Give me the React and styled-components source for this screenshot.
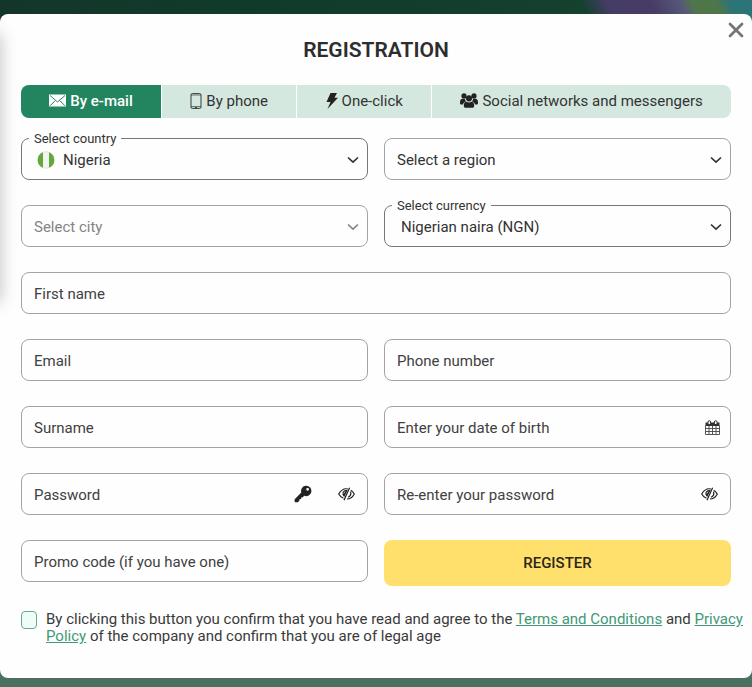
import React, { useState } from "react";
import styled, { createGlobalStyle, css } from "styled-components";

const GlobalStyle = createGlobalStyle`
  *, *::before, *::after { box-sizing: border-box; }
  body { margin: 0; background: #4c705f; }
  body, button, input, select { font-family: Roboto, "Liberation Sans", sans-serif; }
`;

const Backdrop = styled.div`
  min-height: 100vh;
  padding-top: 14px;
  background:
    linear-gradient(64deg, transparent 0 10%, #473c66 24% 46%, #57587a 62%, #4f7648 68% 80%, #2b7477 88%) right top / 176px 30px no-repeat,
    linear-gradient(90deg, #14362a, #0f3c2b 40%, #174531) top / 100% 40px no-repeat,
    #4c705f;
`;

const Modal = styled.main`
  position: relative;
  overflow: hidden;
  padding: 24px 21px 33px;
  border-radius: 8px;
  background: #fefefe;

  &::before {
    content: "";
    position: absolute;
    top: 20px;
    left: -10px;
    width: 10px;
    height: 268px;
    box-shadow: 0 0 16px rgba(0, 0, 0, 0.3);
  }
`;

const CloseButton = styled.button`
  position: absolute;
  top: 6px;
  right: 6px;
  display: flex;
  padding: 0;
  border: 0;
  background: none;
  color: #757575;
  cursor: pointer;
`;

const Title = styled.h1`
  margin: 0 0 23px;
  color: #2d2d2d;
  font-size: 21px;
  font-weight: 600;
  line-height: 24px;
  text-align: center;
`;

const Tabs = styled.div`
  display: flex;
  gap: 1px;
  margin-bottom: 20px;
  overflow: hidden;
  border-radius: 8px;
`;

const Tab = styled.button`
  flex: 1 1 auto;
  display: flex;
  align-items: center;
  justify-content: center;
  gap: 4px;
  height: 33px;
  padding: 0 0 2px;
  border: 0;
  background: ${(p) => (p.$active ? "#238560" : "#d4e8e0")};
  color: ${(p) => (p.$active ? "#fff" : "#333")};
  font-size: 15px;
  font-weight: ${(p) => (p.$active ? 500 : 400)};
  cursor: pointer;
`;

const Form = styled.form`
  display: grid;
  grid-template-columns: 1fr 1fr;
  gap: 25px 16px;
`;

const Field = styled.div`
  position: relative;
  display: grid;
  grid-template-columns: minmax(0, 1fr) auto;
  align-items: center;
  height: 42px;
  border: 1px solid ${(p) => (p.$dark ? "#777" : "#a3a3a3")};
  border-radius: 8px;
  color: ${(p) => (p.$muted ? "#858585" : "#333")};
  grid-column: ${(p) => (p.$wide ? "1 / -1" : "auto")};
`;

const control = css`
  grid-area: 1 / 1 / 2 / -1;
  width: 100%;
  height: 100%;
  margin: 0;
  border: 0;
  outline: 0;
  border-radius: 8px;
  background: transparent;
  color: inherit;
  font-size: 15px;
`;

const TextInput = styled.input`
  ${control}
  padding: 2px 12px 0;
  &::placeholder { color: #414141; opacity: 1; }
`;

const Select = styled.select`
  ${control}
  appearance: none;
  padding: 2px 32px 0 ${(p) => p.$indent}px;
  opacity: 1;
`;

const FloatingLabel = styled.label`
  position: absolute;
  top: -8px;
  left: 7px;
  padding: 0 5px;
  background: #fefefe;
  color: #333;
  font-size: 13px;
  line-height: 16px;
`;

const FlagSlot = styled.span`
  grid-area: 1 / 1;
  display: flex;
  padding: 2px 0 0 15px;
  pointer-events: none;
`;

const ChevronSlot = styled.span`
  grid-area: 1 / 2;
  display: flex;
  padding: 2px 8px 0 0;
  pointer-events: none;
`;

const Actions = styled.div`
  grid-area: 1 / 2;
  display: flex;
  align-items: center;
  gap: 26px;
  padding-right: ${(p) => p.$inset}px;
`;

const IconButton = styled.button`
  position: relative;
  display: flex;
  padding: 0;
  border: 0;
  background: none;
  color: #222;
  cursor: pointer;
`;

const Register = styled.button`
  height: 46px;
  border: 0;
  border-radius: 8px;
  background: #ffe06c;
  color: #2b2618;
  font-size: 15px;
  font-weight: 500;
  cursor: pointer;
`;

const Consent = styled.div`
  grid-column: 1 / -1;
  display: flex;
  align-items: flex-start;
  gap: 9px;
  margin-right: -16px;
  color: #3a3a3a;
  font-size: 15px;
  line-height: 17px;
`;

const Checkbox = styled.input`
  appearance: none;
  flex: none;
  width: 16px;
  height: 18px;
  margin: 0;
  border: 1px solid #68a88e;
  border-radius: 4px;
  background: #effcf7;
  &:checked { background: #238560; }
`;

const Link = styled.a`
  color: #3f9977;
  text-decoration: underline;
`;

const MailIcon = () => (
  <svg width="17" height="13" viewBox="0 0 17 13" aria-hidden="true">
    <rect y="0.5" width="17" height="12" fill="#fff" />
    <path d="M1 1.5 8.5 8 16 1.5M1 11.8l5-5M16 11.8l-5-5" fill="none" stroke="#238560" strokeWidth="1" />
  </svg>
);

const PhoneIcon = () => (
  <svg width="12" height="16" viewBox="0 0 12 16" fill="none" stroke="#3a3a3a" aria-hidden="true">
    <rect x="1" y="0.6" width="10" height="14.8" rx="1.3" />
    <path d="M1 2h10M1 13.6h10" strokeWidth="0.7" />
    <path d="M5 14.6h2" />
  </svg>
);

const BoltIcon = () => (
  <svg width="12" height="16" viewBox="0 0 12 16" fill="#222" aria-hidden="true">
    <path d="M4.500 0H11L8.500 4.800H12L1.500 16l3-7H.5z" />
  </svg>
);

const PeopleIcon = () => (
  <svg width="18" height="15" viewBox="0 0 18 15" fill="#222" aria-hidden="true">
    <circle cx="4" cy="2.900" r="2.600" />
    <circle cx="14" cy="2.900" r="2.600" />
    <path d="M0 9.200C0 7 1 5.800 2.500 5.800h2.300c.2 1.300.6 2 1.500 2.700-1.600.3-2.900 1.300-3.300 3H1.500C.5 11.500 0 11 0 10.200zM18 9.200c0-2.200-1-3.400-2.500-3.400h-2.300c-.2 1.300-.6 2-1.500 2.700 1.600.3 2.900 1.300 3.300 3h1.500c1 0 1.500-.5 1.500-1.300z" />
    <circle cx="9" cy="5.300" r="3.100" />
    <path d="M3.800 12.700c0-2.600 1-3.900 2.900-3.900 1.400 1 3.200 1 4.600 0 1.900 0 2.900 1.300 2.900 3.900 0 1.300-.7 2.100-2 2.100H5.800c-1.300 0-2-.8-2-2.100z" />
  </svg>
);

const Chevron = () => (
  <svg width="12" height="8" viewBox="0 0 12 8" fill="none" stroke="currentColor" strokeWidth="1.700" aria-hidden="true">
    <path d="m1 1.500 5 4.700 5-4.700" />
  </svg>
);

const Flag = () => (
  <svg width="18" height="18" viewBox="0 0 18 18" aria-hidden="true">
    <circle cx="9" cy="9" r="8.300" fill="#f3f4f1" stroke="#cfdcc8" strokeWidth="0.600" />
    <path d="M6 1.200v15.600a8.400 8.400 0 0 1 0-15.600zM12 1.200v15.600a8.400 8.400 0 0 0 0-15.600z" fill="#65a63f" />
  </svg>
);

const CalendarIcon = () => (
  <svg width="15" height="15" viewBox="0 0 15 15" aria-hidden="true">
    <path d="M.5 2.500h14V6H.5z" fill="#333" />
    <path d="M.5 5.500v9h14v-9M4 6v8.500M7.500 6v8.500M11 6v8.500M.5 8.500h14M.5 11.500h14" fill="none" stroke="#444" strokeWidth="0.900" />
    <path d="M3 4V2a1.300 1.300 0 0 1 2.600 0v2M9.400 4V2A1.300 1.300 0 0 1 12 2v2" fill="#fff" stroke="#333" />
  </svg>
);

const KeyIcon = () => (
  <svg width="18" height="18" viewBox="0 0 18 18" fill="#222" aria-hidden="true">
    <path fillRule="evenodd" d="M12 .8a5.200 5.200 0 1 1-1.800 10L8.800 12.200l-1.500.2-.2 1.600-1.600.2-.2 1.600-1.400 1.400H.8l-.3-2.600 6.800-7A5.200 5.200 0 0 1 12 .8zm1.600 2.100a1.400 1.400 0 1 0 0 2.800 1.400 1.400 0 0 0 0-2.800z" />
  </svg>
);

const EyeOffIcon = () => (
  <svg width="17" height="14" viewBox="0 0 17 14" fill="none" stroke="currentColor" aria-hidden="true">
    <path d="M10 2C5.500.9 2.600 3.800.7 7c1.200 2 2.700 3.600 4.700 4.300M12.700 3.200c1.500.9 2.700 2.200 3.600 3.800-1.700 3.200-4.300 5-7.300 5" strokeWidth="1.200" />
    <path d="M11.600.8 6 13.200M12.600 4.700c.6 2.600-.3 4.700-2.500 5.500" strokeWidth="1.200" />
    <path d="M9.600 3.300C6.500 2.400 4 4.500 4.500 7.300c.2 1.100.8 2.100 1.800 2.800z" fill="currentColor" stroke="none" />
    <path d="M5.800 6.500c.1-1 .6-1.600 1.500-1.900" stroke="#fff" strokeWidth="0.800" />
  </svg>
);

const CloseIcon = () => (
  <svg width="20" height="20" viewBox="0 0 20 20" fill="none" stroke="currentColor" strokeWidth="2.800" strokeLinecap="round" aria-hidden="true">
    <path d="m4 4 12 12M16 4 4 16" />
  </svg>
);

const tabs = [
  { id: "email", label: "By e-mail", Icon: MailIcon },
  { id: "phone", label: "By phone", Icon: PhoneIcon },
  { id: "click", label: "One-click", Icon: BoltIcon },
  { id: "social", label: "Social networks and messengers", Icon: PeopleIcon },
];

function SelectField({ id, label, value, floating, muted, indent = 12, flag }) {
  return (
    <Field $dark={floating} $muted={muted}>
      {flag && <FlagSlot><Flag /></FlagSlot>}
      <Select id={id} aria-label={floating ? undefined : label} disabled={muted} $indent={indent}>
        <option>{value}</option>
      </Select>
      {floating && <FloatingLabel htmlFor={id}>{label}</FloatingLabel>}
      <ChevronSlot><Chevron /></ChevronSlot>
    </Field>
  );
}

function InputField({ label, type = "text", wide, inset = 12, children }) {
  return (
    <Field $wide={wide}>
      <TextInput type={type} placeholder={label} aria-label={label} />
      {children && <Actions $inset={inset}>{children}</Actions>}
    </Field>
  );
}

export default function App() {
  const [active, setActive] = useState("email");
  const [visible, setVisible] = useState(false);
  const passwordType = visible ? "text" : "password";
  const toggle = () => setVisible(!visible);

  return (
    <Backdrop>
      <GlobalStyle />
      <Modal>
        <CloseButton type="button" aria-label="Close"><CloseIcon /></CloseButton>
        <Title>REGISTRATION</Title>
        <Tabs role="tablist">
          {tabs.map(({ id, label, Icon }) => (
            <Tab key={id} type="button" role="tab" aria-selected={active === id} $active={active === id} onClick={() => setActive(id)}>
              <Icon />
              {label}
            </Tab>
          ))}
        </Tabs>
        <Form onSubmit={(e) => e.preventDefault()}>
          <SelectField id="country" label="Select country" value="Nigeria" floating flag indent={41} />
          <SelectField id="region" label="Region" value="Select a region" />
          <SelectField id="city" label="City" value="Select city" muted />
          <SelectField id="currency" label="Select currency" value="Nigerian naira (NGN)" floating indent={16} />
          <InputField label="First name" wide />
          <InputField label="Email" type="email" />
          <InputField label="Phone number" type="tel" />
          <InputField label="Surname" />
          <InputField label="Enter your date of birth" inset={10}>
            <IconButton type="button" aria-label="Open calendar"><CalendarIcon /></IconButton>
          </InputField>
          <InputField label="Password" type={passwordType}>
            <IconButton type="button" aria-label="Generate password"><KeyIcon /></IconButton>
            <IconButton type="button" aria-label="Show password" onClick={toggle}><EyeOffIcon /></IconButton>
          </InputField>
          <InputField label="Re-enter your password" type={passwordType}>
            <IconButton type="button" aria-label="Show password" onClick={toggle}><EyeOffIcon /></IconButton>
          </InputField>
          <InputField label="Promo code (if you have one)" />
          <Register type="submit">REGISTER</Register>
          <Consent>
            <Checkbox id="consent" type="checkbox" />
            <label htmlFor="consent">
              By clicking this button you confirm that you have read and agree to the{" "}
              <Link href="#terms">Terms and Conditions</Link> and <Link href="#privacy">Privacy Policy</Link> of the company
              and confirm that you are of legal age
            </label>
          </Consent>
        </Form>
      </Modal>
    </Backdrop>
  );
}
